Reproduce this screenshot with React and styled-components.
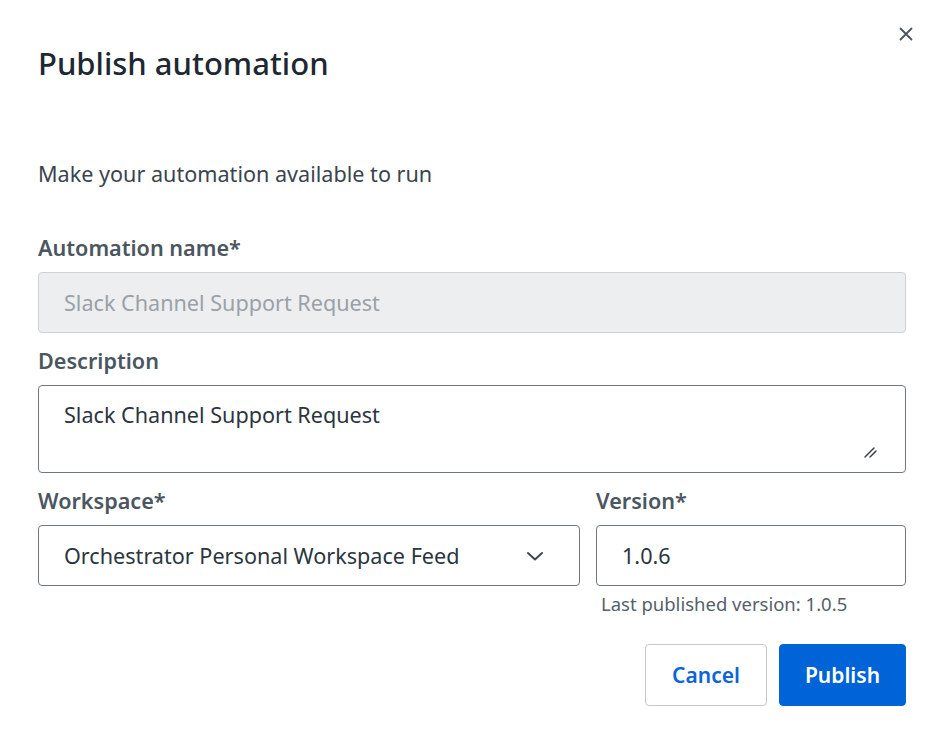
import React from 'react';
import styled, { createGlobalStyle } from 'styled-components';

const GlobalStyle = createGlobalStyle`
  html, body {
    margin: 0;
    padding: 0;
    background: #ffffff;
  }
  body {
    font-family: "Noto Sans", "Open Sans", "Liberation Sans", sans-serif;
  }
  * { box-sizing: border-box; }
`;

// Dialog shell
const Dialog = styled.div`
  width: 936px;
  height: 740px;
  padding: 26px 30px 0 38px;
  display: flex;
  flex-direction: column;
  background: #fff;
`;

const Header = styled.div`
  display: flex;
  justify-content: space-between;
  align-items: flex-start;
`;

const Title = styled.h1`
  margin: 19px 0 0;
  font-size: 31px;
  line-height: 36px;
  font-weight: 500;
  color: #1d2833;
`;

const CloseButton = styled.button`
  width: 16px;
  height: 16px;
  margin-right: -8px;
  padding: 0;
  border: none;
  background: none;
  display: flex;
  align-items: center;
  justify-content: center;
  cursor: pointer;
  color: #4a5560;
`;

const Subtitle = styled.p`
  margin: 79px 0 0;
  font-size: 21.6px;
  line-height: 28px;
  color: #3a444e;
`;

const Form = styled.div`
  margin-top: 46px;
  display: flex;
  flex-direction: column;
  gap: 14px;
`;

const Row = styled.div`
  display: flex;
  gap: 16px;
`;

const Field = styled.div`
  display: flex;
  flex-direction: column;
  gap: 10px;
  flex: ${p => p.$flex || 1};
`;

const Label = styled.label`
  font-size: 21.6px;
  line-height: 28px;
  font-weight: 600;
  color: #4b5661;
`;

const Control = styled.div`
  position: relative;
  height: ${p => p.$height || 61}px;
  border: 1px solid ${p => (p.$disabled ? '#cdd2d7' : '#6f7882')};
  border-radius: 4px;
  background: ${p => (p.$disabled ? '#eceef0' : '#fff')};
  padding: 0 25px;
  display: flex;
  align-items: ${p => (p.$top ? 'flex-start' : 'center')};
  justify-content: space-between;
  padding-top: ${p => (p.$top ? '15px' : '0')};
  font-size: 21.6px;
  line-height: 28px;
  color: ${p => (p.$disabled ? '#9ba1a7' : '#2b3540')};
`;

const ResizeHandle = styled.svg`
  position: absolute;
  right: 26px;
  bottom: 13px;
`;

const Helper = styled.div`
  margin-top: -3px;
  padding-left: 5px;
  font-size: 18.5px;
  line-height: 22px;
  color: #56606a;
`;

const Actions = styled.div`
  margin-top: 29px;
  display: flex;
  justify-content: flex-end;
  gap: 12px;
`;

const Button = styled.button`
  height: 62px;
  width: ${p => p.$width}px;
  border-radius: 4px;
  font-family: inherit;
  font-size: 21px;
  font-weight: 600;
  cursor: pointer;
  border: 1px solid ${p => (p.$primary ? '#0063d8' : '#c3c9cf')};
  background: ${p => (p.$primary ? '#0063d8' : '#fff')};
  color: ${p => (p.$primary ? '#fff' : '#0a66d6')};
`;

export default function App() {
  return (
    <>
      <GlobalStyle />
      <Dialog>
        <Header>
          <Title>Publish automation</Title>
          <CloseButton aria-label="Close">
            <svg width="14" height="14" viewBox="0 0 14 14">
              <path d="M1.5 1.5 L12.5 12.5 M12.5 1.5 L1.5 12.5" stroke="#4a5560" strokeWidth="1.8" strokeLinecap="round" />
            </svg>
          </CloseButton>
        </Header>
        <Subtitle>Make your automation available to run</Subtitle>
        <Form>
          <Field>
            <Label>Automation name*</Label>
            <Control $disabled>Slack Channel Support Request</Control>
          </Field>
          <Field>
            <Label>Description</Label>
            <Control $height={88} $top>
              Slack Channel Support Request
              <ResizeHandle width="16" height="14" viewBox="0 0 16 14">
                <path d="M2 12 L11 3 M7 12 L13 6" stroke="#3a434c" strokeWidth="1.5" strokeLinecap="round" />
              </ResizeHandle>
            </Control>
          </Field>
          <Row>
            <Field $flex={542}>
              <Label>Workspace*</Label>
              <Control>
                Orchestrator Personal Workspace Feed
                <svg width="18" height="12" viewBox="0 0 18 12" style={{ marginRight: 10 }}>
                  <path d="M2 3 L9 9.5 L16 3" fill="none" stroke="#3f4953" strokeWidth="2" strokeLinecap="round" strokeLinejoin="round" />
                </svg>
              </Control>
            </Field>
            <Field $flex={310}>
              <Label>Version*</Label>
              <Control>1.0.6</Control>
              <Helper>Last published version: 1.0.5</Helper>
            </Field>
          </Row>
        </Form>
        <Actions>
          <Button $width={122}>Cancel</Button>
          <Button $primary $width={127}>Publish</Button>
        </Actions>
      </Dialog>
    </>
  );
}
